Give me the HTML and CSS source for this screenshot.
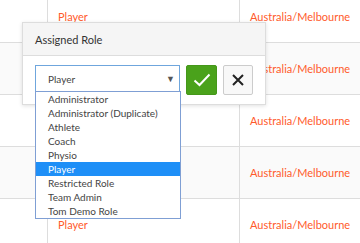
FILE: index.html
```html
<!DOCTYPE html>
<html>
<head>
    <title>Assigned Role</title>
    <link rel="stylesheet" href="styles.css">
</head>
<body>
    <div class="user-table">
        <div class="row">
            <div class="cell first"></div>
            <div class="cell role">Player</div>
            <div class="cell zone">Australia/Melbourne</div>
        </div>
        <div class="row">
            <div class="cell first"></div>
            <div class="cell role">Player</div>
            <div class="cell zone">Australia/Melbourne</div>
        </div>
        <div class="row">
            <div class="cell first"></div>
            <div class="cell role">Player</div>
            <div class="cell zone">Australia/Melbourne</div>
        </div>
        <div class="row">
            <div class="cell first"></div>
            <div class="cell role">Player</div>
            <div class="cell zone">Australia/Melbourne</div>
        </div>
        <div class="row">
            <div class="cell first"></div>
            <div class="cell role">Player</div>
            <div class="cell zone">Australia/Melbourne</div>
        </div>
    </div>

    <div class="role-popup">
        <div class="popup-header">Assigned Role</div>
        <div class="popup-body">
            <div class="role-select">
                <span>Player</span>
                <span class="arrow">&#9660;</span>
                <!-- open listbox of the select -->
                <ul class="role-options">
                    <li>Administrator</li>
                    <li>Administrator (Duplicate)</li>
                    <li>Athlete</li>
                    <li>Coach</li>
                    <li>Physio</li>
                    <li class="selected">Player</li>
                    <li>Restricted Role</li>
                    <li>Team Admin</li>
                    <li>Tom Demo Role</li>
                </ul>
            </div>
            <button class="btn-ok" type="button">
                <svg width="18" height="14" viewBox="0 0 18 14"><path d="M1.5 7.5 L6.5 12 L16.5 1.5" fill="none" stroke="#fff" stroke-width="2"/></svg>
            </button>
            <button class="btn-cancel" type="button">
                <svg width="12" height="12" viewBox="0 0 12 12"><path d="M1 1 L11 11 M11 1 L1 11" fill="none" stroke="#222" stroke-width="2"/></svg>
            </button>
        </div>
    </div>
</body>
</html>
```

FILE: styles.css
```css
body {
    margin: 0;
    padding: 0;
    font-family: Lato, "Open Sans", sans-serif;
    background-color: #fff;
    overflow: hidden;
}

.user-table {
    margin-top: -9px;
}

.row {
    display: grid;
    grid-template-columns: 48px 192px 1fr;
    height: 52px;
    border-bottom: 1px solid #ddd;
    box-sizing: border-box;
}

.row:nth-child(even) {
    background-color: #fafafa;
}

.cell {
    display: flex;
    align-items: center;
    padding-left: 10px;
    font-size: 11px;
    color: #ff5a2c;
}

.cell.first,
.cell.role {
    border-right: 1px solid #ddd;
}

.role-popup {
    position: absolute;
    top: 22px;
    left: 22px;
    width: 244px;
    height: 83px;
    box-sizing: border-box;
    background-color: #fff;
    border: 1px solid #ddd;
    box-shadow: 0 1px 4px rgba(0, 0, 0, 0.12);
}

.popup-header {
    height: 33px;
    box-sizing: border-box;
    padding-left: 12px;
    display: flex;
    align-items: center;
    background-color: #f5f5f5;
    border-bottom: 1px solid #ddd;
    font-size: 11px;
    color: #333;
}

.popup-body {
    display: flex;
    align-items: flex-start;
    padding: 9px 0 0 12px;
}

.role-select {
    position: relative;
    width: 145px;
    height: 27px;
    box-sizing: border-box;
    border: 1px solid #6fa6dd;
    display: flex;
    align-items: center;
    padding-left: 12px;
    font-size: 10px;
    color: #444;
}

.role-select .arrow {
    margin-left: auto;
    margin-right: 4px;
    font-size: 9px;
    color: #555;
}

.role-options {
    position: absolute;
    top: 25px;
    left: -1px;
    width: 146px;
    margin: 0;
    padding: 0;
    list-style: none;
    background-color: #fff;
    border: 1px solid #7f9fd4;
    box-sizing: border-box;
}

.role-options li {
    height: 14px;
    line-height: 14px;
    padding-left: 12px;
    font-size: 10px;
    color: #444;
}

.role-options li.selected {
    background-color: #1e8ff7;
    color: #fff;
}

.btn-ok,
.btn-cancel {
    display: flex;
    align-items: center;
    justify-content: center;
    height: 30px;
    padding: 0;
    border-radius: 2px;
    cursor: pointer;
}

.btn-ok {
    width: 31px;
    margin-left: 6px;
    background-color: #4aa21b;
    border: 1px solid #45971a;
}

.btn-cancel {
    width: 30px;
    margin-left: 6px;
    background-color: #f8f8f8;
    border: 1px solid #ccc;
}
```
